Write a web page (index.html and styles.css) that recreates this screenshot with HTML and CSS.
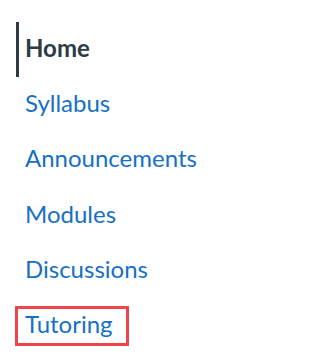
FILE: index.html
```html
<!DOCTYPE html>
<html>
<head>
<meta charset="utf-8">
<link rel="stylesheet" href="styles.css">
</head>
<body>
<nav class="course-nav">
  <ul class="nav-list">
    <li class="nav-item active"><a href="#">Home</a></li>
    <li class="nav-item"><a href="#">Syllabus</a></li>
    <li class="nav-item"><a href="#">Announcements</a></li>
    <li class="nav-item"><a href="#">Modules</a></li>
    <li class="nav-item"><a href="#">Discussions</a></li>
    <li class="nav-item"><a class="highlight" href="#">Tutoring</a></li>
  </ul>
</nav>
</body>
</html>
```
FILE: styles.css
```css
html, body {
  margin: 0;
  padding: 0;
  background: #ffffff;
}
body {
  font-family: Lato, "Open Sans", "Liberation Sans", sans-serif;
}
.course-nav {
  padding: 22px 0 0 16px;
}
.nav-list {
  list-style: none;
  margin: 0;
  padding: 0;
}
.nav-item {
  font-size: 24px;
  line-height: 52px;
  padding: 0 0 3.2px 6px;
  border-left: 3px solid transparent;
}
.nav-item a {
  color: #1770c4;
  text-decoration: none;
}
.nav-item.active {
  border-left-color: #2d3b45;
}
.nav-item.active a {
  color: #2d3b45;
  font-weight: bold;
}
.highlight {
  display: inline-block;
  line-height: 30px;
  margin-left: -10px;
  padding: 0 13px 4px 7px;
  border: 3px solid #f0444a;
}
```
